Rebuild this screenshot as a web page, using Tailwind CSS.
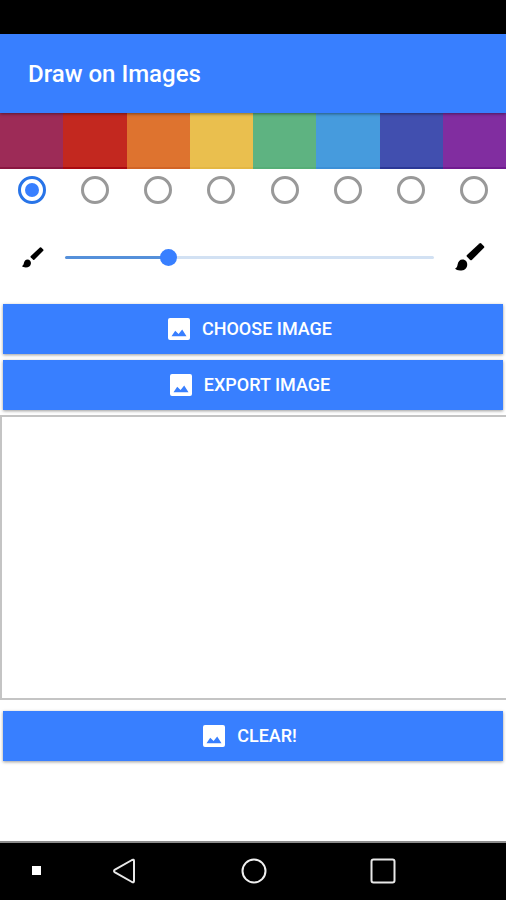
<!DOCTYPE html>
<html lang="en">
<head>
<meta charset="utf-8">
<meta name="viewport" content="width=device-width, initial-scale=1">
<title>Draw on Images</title>
<script src="https://cdn.jsdelivr.net/npm/@tailwindcss/browser@4"></script>
</head>
<body class="flex min-h-screen flex-col bg-white font-['Roboto',sans-serif]">
<svg class="hidden" aria-hidden="true">
  <symbol id="brush" viewBox="0 0 30 28">
    <path d="M26.2 .4 29 3.2Q29.6 4 29 4.8L16.8 17Q16 17.7 15.2 17L11.8 13.6Q11.2 12.8 12 12L24.4 .5Q25.4 -.2 26.2 .4Z"/>
    <path d="M7.5 16.6C10.5 16.6 12.6 19 12.2 22.2C11.8 25.8 9 27.6 5.2 27.6C2.8 27.6 .9 26.9 0 25.6C1.8 25 2.2 23.6 2.6 21.6C3.1 18.6 4.8 16.6 7.5 16.6Z"/>
  </symbol>
  <symbol id="picture" viewBox="0 0 22 22">
    <path fill-rule="evenodd" d="M2 0H20Q22 0 22 2V20Q22 22 20 22H2Q0 22 0 20V2Q0 0 2 0ZM3.5 18.2H18.5L14.2 11.6L10.6 16L7.2 12.8Z"/>
  </symbol>
</svg>

<div class="h-[34px] bg-black"></div>
<header class="relative z-10 flex h-[79px] items-center bg-[#387fff] px-7 shadow-[0_1px_3px_rgba(0,0,0,0.45)]">
  <h1 class="text-2xl leading-7 font-medium text-white">Draw on Images</h1>
</header>

<main class="flex flex-col">
  <fieldset class="grid grid-cols-8">
    <label class="flex flex-col items-center gap-[7px]"><span class="h-14 w-full border-b-2 border-[#8a1640] bg-[#9d2b57]"></span><input type="radio" name="color" aria-label="Maroon" checked class="size-7 appearance-none rounded-full border-[3px] border-[#999999] checked:border-[#2874e8] checked:bg-[#387fff] checked:bg-clip-content checked:p-1"></label>
    <label class="flex flex-col items-center gap-[7px]"><span class="h-14 w-full border-b-2 border-[#a90a10] bg-[#c3281f]"></span><input type="radio" name="color" aria-label="Red" class="size-7 appearance-none rounded-full border-[3px] border-[#999999] checked:border-[#2874e8] checked:bg-[#387fff] checked:bg-clip-content checked:p-1"></label>
    <label class="flex flex-col items-center gap-[7px]"><span class="h-14 w-full border-b-2 border-[#d26325] bg-[#de732f]"></span><input type="radio" name="color" aria-label="Orange" class="size-7 appearance-none rounded-full border-[3px] border-[#999999] checked:border-[#2874e8] checked:bg-[#387fff] checked:bg-clip-content checked:p-1"></label>
    <label class="flex flex-col items-center gap-[7px]"><span class="h-14 w-full border-b-2 border-[#e4b743] bg-[#eabf4e]"></span><input type="radio" name="color" aria-label="Yellow" class="size-7 appearance-none rounded-full border-[3px] border-[#999999] checked:border-[#2874e8] checked:bg-[#387fff] checked:bg-clip-content checked:p-1"></label>
    <label class="flex flex-col items-center gap-[7px]"><span class="h-14 w-full border-b-2 border-[#56ae77] bg-[#5eb381]"></span><input type="radio" name="color" aria-label="Green" class="size-7 appearance-none rounded-full border-[3px] border-[#999999] checked:border-[#2874e8] checked:bg-[#387fff] checked:bg-clip-content checked:p-1"></label>
    <label class="flex flex-col items-center gap-[7px]"><span class="h-14 w-full border-b-2 border-[#3c90d6] bg-[#469bdd]"></span><input type="radio" name="color" aria-label="Light blue" class="size-7 appearance-none rounded-full border-[3px] border-[#999999] checked:border-[#2874e8] checked:bg-[#387fff] checked:bg-clip-content checked:p-1"></label>
    <label class="flex flex-col items-center gap-[7px]"><span class="h-14 w-full border-b-2 border-[#2b3896] bg-[#414faf]"></span><input type="radio" name="color" aria-label="Indigo" class="size-7 appearance-none rounded-full border-[3px] border-[#999999] checked:border-[#2874e8] checked:bg-[#387fff] checked:bg-clip-content checked:p-1"></label>
    <label class="flex flex-col items-center gap-[7px]"><span class="h-14 w-full border-b-2 border-[#701b90] bg-[#812da0]"></span><input type="radio" name="color" aria-label="Purple" class="size-7 appearance-none rounded-full border-[3px] border-[#999999] checked:border-[#2874e8] checked:bg-[#387fff] checked:bg-clip-content checked:p-1"></label>
  </fieldset>

  <div class="flex h-[100px] items-center pt-[6px] pr-[21px] pl-[22px]">
    <svg class="h-[21px] w-[22px]" aria-hidden="true"><use href="#brush"/></svg>
    <input type="range" min="0" max="100" value="27" aria-label="Brush size" class="mx-[21px] h-[3px] min-w-0 flex-1 appearance-none rounded-full bg-linear-to-r from-[#5590da] from-28% to-[#d2e1f3] to-28% [&::-webkit-slider-thumb]:size-[17px] [&::-webkit-slider-thumb]:appearance-none [&::-webkit-slider-thumb]:rounded-full [&::-webkit-slider-thumb]:bg-[#387fff]">
    <svg class="h-7 w-[30px]" aria-hidden="true"><use href="#brush"/></svg>
  </div>

  <div class="flex flex-col gap-[6px] px-[3px]">
    <button type="button" class="flex h-[50px] items-center justify-center gap-3 bg-[#387fff] pr-[6px] text-lg font-medium text-white shadow-[0_1px_3px_rgba(0,0,0,0.4)]"><svg class="size-[22px] fill-white" aria-hidden="true"><use href="#picture"/></svg>CHOOSE IMAGE</button>
    <button type="button" class="flex h-[50px] items-center justify-center gap-3 bg-[#387fff] pr-[6px] text-lg font-medium text-white shadow-[0_1px_3px_rgba(0,0,0,0.4)]"><svg class="size-[22px] fill-white" aria-hidden="true"><use href="#picture"/></svg>EXPORT IMAGE</button>
  </div>
  <canvas aria-label="Drawing area" class="mt-[5px] h-[285px] w-full border-y-2 border-l-2 border-[#c4c4c4]"></canvas>
  <div class="flex flex-col px-[3px] pt-[11px] pb-5">
    <button type="button" class="flex h-[50px] items-center justify-center gap-3 bg-[#387fff] pr-[6px] text-lg font-medium text-white shadow-[0_1px_3px_rgba(0,0,0,0.4)]"><svg class="size-[22px] fill-white" aria-hidden="true"><use href="#picture"/></svg>CLEAR!</button>
  </div>
</main>

<nav aria-label="System" class="mt-auto grid h-[59px] grid-cols-[72fr_104fr_155fr_104fr_71fr] items-center justify-items-center border-t-2 border-[#8d8d8d] bg-black pb-[2px]">
  <span class="size-[9px] bg-white"></span>
  <button type="button" aria-label="Back"><svg class="h-[26px] w-6 fill-none stroke-[#e8e8e8] stroke-2" viewBox="0 0 24 26"><path stroke-linejoin="round" d="M20 2Q22 1 22 3V23Q22 25 20 24L3 14.3Q1 13 3 11.7Z"/></svg></button>
  <button type="button" aria-label="Home"><svg class="size-[26px] fill-none stroke-[#f0f0f0] stroke-2" viewBox="0 0 26 26"><circle cx="13" cy="13" r="11.5"/></svg></button>
  <button type="button" aria-label="Recent apps"><svg class="size-[26px] fill-none stroke-[#e8e8e8] stroke-2" viewBox="0 0 26 26"><rect x="1.5" y="1.5" width="23" height="23" rx="2"/></svg></button>
</nav>
</body>
</html>
